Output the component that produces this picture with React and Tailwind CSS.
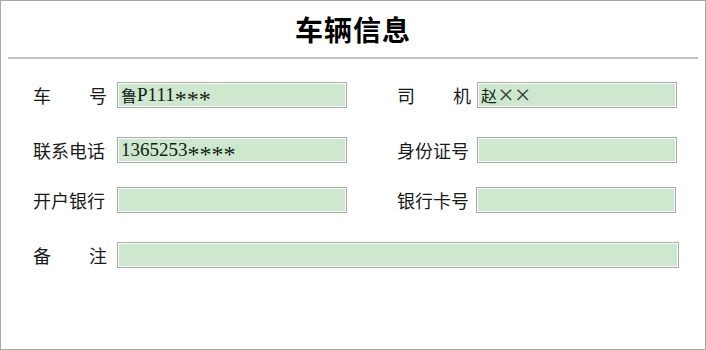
import React from "react";

const cjk = { fontFamily: '"Noto Sans CJK SC", sans-serif' };
const mixed = { fontFamily: '"Liberation Serif", "Noto Sans CJK SC", serif' };

function Label({ chars, spread }) {
  return (
    <div
      className={`flex w-[74px] shrink-0 text-[18px] leading-none text-[#1a1a1a] ${
        spread ? "justify-between" : ""
      }`}
      style={cjk}
    >
      {spread
        ? chars.split("").map((c, i) => <span key={i}>{c}</span>)
        : chars}
    </div>
  );
}

function Field({ width, children }) {
  return (
    <div
      className={`${width} h-[26px] shrink-0 border border-[#a9a9a9] bg-[#cde8cf] shadow-[inset_0_0_0_1px_#ffffff] flex items-center pl-[3px] text-[19px] leading-[20px] text-[#142014]`}
      style={mixed}
    >
      {children}
    </div>
  );
}

function Stars({ n }) {
  return (
    <span className="relative top-[4px] text-[24px] leading-[18px]">
      {"*".repeat(n)}
    </span>
  );
}

export default function App() {
  return (
    <div className="w-[706px] h-[350px] border border-[#a8a8a8] bg-white">
      <div className="h-[56px] flex items-center justify-center">
        <h1
          className="text-[28px] font-bold leading-none text-black tracking-[1px]"
          style={cjk}
        >
          车辆信息
        </h1>
      </div>
      <div className="mx-[7px] h-[2px] bg-[#c2c2c2]" />

      <div className="pl-[32px] pt-[23px]">
        <div className="flex items-center">
          <Label chars="车号" spread />
          <div className="ml-[10px]">
            <Field width="w-[230px]">
              <span className="text-[16px]" style={cjk}>鲁</span>P111<Stars n={3} />
            </Field>
          </div>
          <div className="ml-[50px]">
            <Label chars="司机" spread />
          </div>
          <div className="ml-[6px]">
            <Field width="w-[200px]">
              <span className="text-[16px]" style={cjk}>赵</span>
              <span className="text-[28px] font-light leading-[18px] ml-[1px] tracking-[1px] text-[#3a463a]">××</span>
            </Field>
          </div>
        </div>

        <div className="flex items-center mt-[29px]">
          <Label chars="联系电话" />
          <div className="ml-[10px]">
            <Field width="w-[230px]">1365253<Stars n={4} /></Field>
          </div>
          <div className="ml-[50px]">
            <Label chars="身份证号" />
          </div>
          <div className="ml-[6px]">
            <Field width="w-[200px]" />
          </div>
        </div>

        <div className="flex items-center mt-[24px]">
          <Label chars="开户银行" />
          <div className="ml-[10px]">
            <Field width="w-[230px]" />
          </div>
          <div className="ml-[50px]">
            <Label chars="银行卡号" />
          </div>
          <div className="ml-[5px]">
            <Field width="w-[200px]" />
          </div>
        </div>

        <div className="flex items-center mt-[29px]">
          <Label chars="备注" spread />
          <div className="ml-[10px]">
            <Field width="w-[562px]" />
          </div>
        </div>
      </div>
    </div>
  );
}
